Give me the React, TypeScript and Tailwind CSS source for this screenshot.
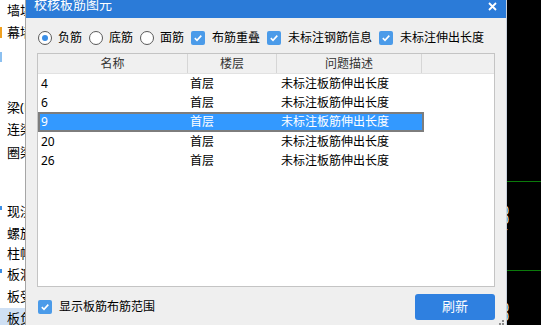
import React from 'react';

const sideItems = [
  { label: '墙垛', h: 'h-[21px]', mark: '' },
  { label: '幕墙', h: 'h-[23px]', mark: 'orange' },
  { label: '', h: 'h-[22px]', mark: 'blue-lite' },
  { label: '', h: 'h-[31px]', mark: '' },
  { label: '梁(L)', h: 'h-[22px]', mark: '' },
  { label: '连梁', h: 'h-[22px]', mark: '' },
  { label: '圈梁', h: 'h-[24px]', mark: '' },
  { label: '', h: 'h-[36px]', mark: '' },
  { label: '现浇板', h: 'h-[22px]', mark: 'blue' },
  { label: '螺旋板', h: 'h-[21px]', mark: '' },
  { label: '柱帽', h: 'h-[20px]', mark: '' },
  { label: '板洞', h: 'h-[22px]', mark: 'blue' },
  { label: '板受力筋', h: 'h-[22px]', mark: '' },
  { label: '板负筋', h: 'h-[22px]', mark: '', active: true },
];

const rows = [
  { name: '4', floor: '首层', desc: '未标注板筋伸出长度' },
  { name: '6', floor: '首层', desc: '未标注板筋伸出长度' },
  { name: '9', floor: '首层', desc: '未标注板筋伸出长度', selected: true },
  { name: '20', floor: '首层', desc: '未标注板筋伸出长度' },
  { name: '26', floor: '首层', desc: '未标注板筋伸出长度' },
];

const Radio: React.FC<{ checked?: boolean; label: string }> = ({ checked, label }) => (
  <label className="flex items-center gap-[6px]">
    <span className="w-[14px] h-[14px] rounded-full border border-[#5a5a5a] bg-white flex items-center justify-center">
      {checked && <span className="w-[6px] h-[6px] rounded-full bg-[#3a8ee6]" />}
    </span>
    <span>{label}</span>
  </label>
);

const Check: React.FC<{ label: string }> = ({ label }) => (
  <label className="flex items-center gap-[7px]">
    <span className="w-[14px] h-[14px] rounded-[2px] bg-[#4b9be9] flex items-center justify-center">
      <svg width="10" height="10" viewBox="0 0 10 10">
        <path d="M1.8 5.2 L4 7.3 L8.3 2.6" fill="none" stroke="white" strokeWidth="1.6" />
      </svg>
    </span>
    <span>{label}</span>
  </label>
);

export default function App() {
  return (
    <div
      className="w-[541px] h-[325px] flex overflow-hidden bg-white text-[12px] text-black"
      style={{ fontFamily: '"Noto Sans", "Noto Sans CJK SC", sans-serif' }}
    >
      {/* left tree, mostly hidden under the dialog */}
      <div className="w-[25px] shrink-0 flex flex-col overflow-hidden bg-white">
        {sideItems.map((item, i) => (
          <div
            key={i}
            className={`relative shrink-0 ${item.h} flex items-center pl-[7px] whitespace-nowrap text-[13px] ${
              item.active ? 'bg-[#cfe0f4]' : ''
            }`}
          >
            {item.mark === 'orange' && <span className="absolute left-0 top-[6px] w-[2px] h-[11px] bg-[#f0a020]" />}
            {item.mark === 'blue' && <span className="absolute left-0 top-[5px] w-[2px] h-[4px] bg-[#3a8ee6]" />}
            {item.mark === 'blue-lite' && <span className="absolute left-0 top-[8px] w-[2px] h-[10px] bg-[#8cc0f0]" />}
            {item.label}
          </div>
        ))}
      </div>

      {/* dialog */}
      <div className="w-[482px] shrink-0 flex flex-col bg-[#efefef] border-l border-[#a6a6a6] border-r border-r-[#c9d1dc] relative">
        <div className="h-[18px] bg-[#2b7bd8] flex items-start justify-between pl-[8px] pr-[9px]">
          <span className="text-white text-[13px] leading-[13px] -mt-[2px]">校核板筋图元</span>
          <svg width="9" height="9" viewBox="0 0 9 9" className="mt-[2px]">
            <path d="M1 1 L8 8 M8 1 L1 8" stroke="white" strokeWidth="1.8" />
          </svg>
        </div>

        <div className="h-[20px] mt-[10px] pl-[12px] flex items-center gap-[7px]">
          <Radio checked label="负筋" />
          <Radio label="底筋" />
          <Radio label="面筋" />
          <Check label="布筋重叠" />
          <Check label="未标注钢筋信息" />
          <Check label="未标注伸出长度" />
        </div>

        <div className="mt-[5px] ml-[11px] w-[458px] h-[234px] border border-[#c4c4c4] bg-white flex flex-col">
          <div className="h-[20px] bg-[#f0f0f0] border-b border-[#e2e2e2] flex text-[#333]">
            <div className="w-[150px] border-r border-[#d6d6d6] flex items-center justify-center">名称</div>
            <div className="w-[89px] border-r border-[#d6d6d6] flex items-center justify-center">楼层</div>
            <div className="w-[145px] border-r border-[#d6d6d6] flex items-center justify-center">问题描述</div>
            <div className="flex-1" />
          </div>
          {rows.map((r) => (
            <div
              key={r.name}
              className={`w-[386px] flex items-center ${
                r.selected
                  ? 'h-[20px] bg-[#3399ff] text-white outline-2 outline-[#7d7d7d] -outline-offset-2'
                  : 'h-[19px]'
              }`}
            >
              <div className="w-[150px] pl-[3px]">{r.name}</div>
              <div className="w-[90px] pl-[2px]">{r.floor}</div>
              <div className="pl-[3px]">{r.desc}</div>
            </div>
          ))}
        </div>

        <div className="mt-[7px] pl-[12px] pr-[11px] flex items-center justify-between">
          <Check label="显示板筋布筋范围" />
          <button className="w-[80px] h-[26px] rounded-[3px] bg-[#2f80e0] text-white text-[13px]">刷新</button>
        </div>

        <div className="absolute right-[2px] bottom-[0px] grid grid-cols-2 gap-[1px]">
          <span className="w-[2px] h-[2px]" />
          <span className="w-[2px] h-[2px] bg-[#8a8a8a]" />
          <span className="w-[2px] h-[2px] bg-[#8a8a8a]" />
          <span className="w-[2px] h-[2px] bg-[#8a8a8a]" />
        </div>
      </div>

      {/* cad canvas */}
      <div className="flex-1 bg-black flex flex-col overflow-hidden">
        <div className="h-[181px] shrink-0" />
        <div className="h-px bg-[#0b7a0b] shrink-0" />
        <div className="h-[88px] shrink-0 relative overflow-hidden">
          <span className="absolute -left-[5px] top-[26px] text-white text-[12px] leading-[9px] font-['Liberation_Mono']">
            0<br />0<br />-
          </span>
        </div>
        <div className="h-px bg-[#0b7a0b] shrink-0" />
        <div className="flex-1 relative overflow-hidden">
          <span className="absolute -left-[5px] top-[34px] text-white text-[12px] leading-[9px] font-['Liberation_Mono']">
            0<br />0
          </span>
        </div>
      </div>
    </div>
  );
}
